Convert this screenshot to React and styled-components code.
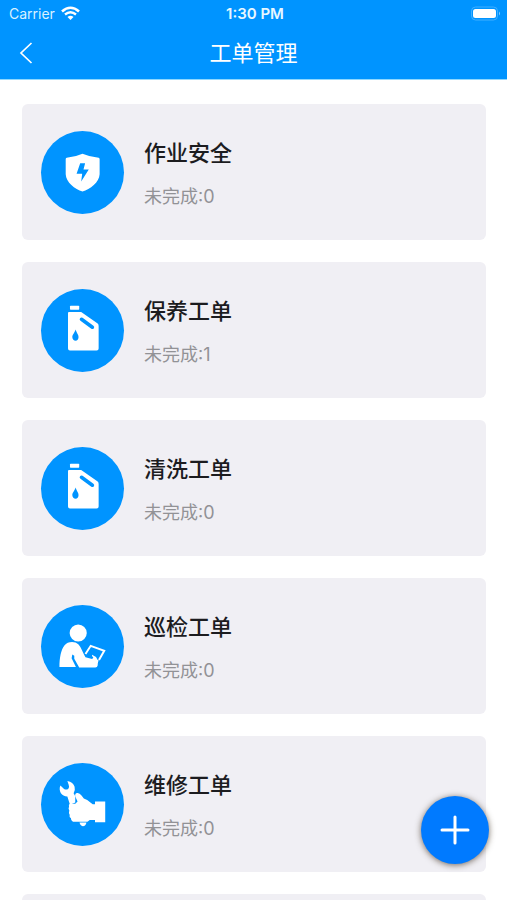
import React from "react";
import styled, { createGlobalStyle } from "styled-components";

const BLUE = "#0094ff";

const GlobalStyle = createGlobalStyle`
  * { box-sizing: border-box; }
  body {
    margin: 0;
    background: #fff;
    font-family: Inter, "Noto Sans CJK SC", sans-serif;
  }
`;

const Screen = styled.div`
  height: 100vh;
  display: flex;
  flex-direction: column;
  overflow: hidden;
`;

const Header = styled.header`
  flex: none;
  color: #fff;
  background: ${BLUE};
  border-bottom: 1px solid #8fd8ff;
`;

const StatusBar = styled.div`
  display: grid;
  grid-template-columns: 1fr auto 1fr;
  align-items: center;
  height: 27px;
  padding: 0 6px 0 9px;
  font-size: 14px;
  line-height: 20px;
`;

const Carrier = styled.div`
  display: flex;
  align-items: center;
  gap: 6px;
  color: #d9f1ff;
`;

const Clock = styled.time`
  font-size: 15px;
  font-weight: 600;
  color: #e8f7ff;
`;

const Battery = styled.svg`
  justify-self: end;
`;

const NavBar = styled.nav`
  display: grid;
  grid-template-columns: 52px 1fr 52px;
  align-items: center;
  height: 52px;
`;

const BackButton = styled.button`
  display: flex;
  align-items: center;
  justify-content: center;
  height: 44px;
  padding: 0;
  border: 0;
  color: inherit;
  background: none;
  cursor: pointer;
`;

const PageTitle = styled.h1`
  margin: 0;
  text-align: center;
  font-size: 22px;
  line-height: 32px;
  font-weight: 400;
`;

const OrderList = styled.main`
  flex: 1;
  min-height: 0;
  display: flex;
  flex-direction: column;
  gap: 22px;
  padding: 24px 21px 24px 22px;
  overflow-y: auto;
  scrollbar-width: none;
`;

const OrderCard = styled.a`
  flex: none;
  display: flex;
  align-items: center;
  gap: 20px;
  height: 136px;
  padding: 0 19px;
  border-radius: 6px;
  background: #f0eff4;
  color: inherit;
  text-decoration: none;
`;

const OrderIcon = styled.svg`
  flex: none;
  width: 83px;
  height: 83px;
  border-radius: 50%;
  background: ${BLUE};
`;

const OrderText = styled.div`
  display: flex;
  flex-direction: column;
  gap: 16px;
  padding-top: 3px;
`;

const OrderName = styled.h2`
  margin: 0;
  font-size: 22px;
  line-height: 30px;
  font-weight: 500;
  color: #1c1c1f;
`;

const OrderCount = styled.p`
  margin: 0;
  font-size: 18px;
  line-height: 26px;
  font-weight: 400;
  color: #929296;
`;

const AddButton = styled.button`
  position: fixed;
  right: 18px;
  bottom: 36px;
  display: flex;
  align-items: center;
  justify-content: center;
  width: 68px;
  height: 68px;
  padding: 0;
  border: 0;
  border-radius: 50%;
  color: #fff;
  background: #007aff;
  box-shadow: 0 1px 6px rgba(60, 45, 30, 0.7);
  cursor: pointer;
`;

const Shield = () => (
  <>
    <path fill="#fff" d="M141 83Q164 93 190 95Q193 96 193 100V145C192 170 164 190 141 198C118 190 91 170 90 145V100Q90 96 93 95Q119 93 141 83Z" />
    <path fill={BLUE} d="M134 112H149L144 131H160L137 167L140 144H123Z" />
  </>
);

const OilCan = () => (
  <>
    <rect x="103" y="65" width="28" height="12" rx="2" fill="#fff" />
    <path fill="#fff" d="M100 84H137L187 119Q190 121 190 126V195Q190 201 184 201H103Q97 201 97 195V87Q97 84 100 84Z" />
    <path d="M138 106L171 130" stroke={BLUE} strokeWidth="11" strokeLinecap="round" />
    <path fill={BLUE} d="M120 137C123 148 129 152 129 160C129 167 125 171 120 171C115 171 110 167 110 160C110 152 117 148 120 137Z" />
  </>
);

const Inspector = () => (
  <>
    <circle cx="128" cy="99" r="26" fill="#fff" />
    <path fill="#fff" d="M71 202C71 174 76 150 86 137C96 124 118 123 129 134C137 143 142 158 150 173L170 178L174 174Q168 168 170 165L182 172L187 181L190 182Q187 190 187 198Q186 204 180 204H131L116 177V168L110 164L108 176L121 202Z" />
    <path fill="none" stroke="#fff" strokeWidth="6" d="M150 163L166 138L207 153L191 181" />
  </>
);

const WrenchHand = () => (
  <>
    <path fill="#fff" d="M74 82L85 93Q92 97 98 92Q102 87 99 80L95 69Q113 73 117 86Q120 97 114 106L119 115V134L103 141L95 116Q82 115 75 105Q69 93 74 82Z" />
    <path fill="#fff" d="M103 138H119L126 131L119 116Q117 106 125 105Q132 104 138 113L145 122Q156 125 164 133L172 139H179V131H210V194H179V187H163L156 192H112Q105 190 106 182Q100 179 102 171Q98 166 101 158Q97 153 100 147Q98 140 103 138Z" />
    <path fill="#fff" d="M132 195H153Q151 206 142 206Q134 205 132 195Z" />
  </>
);

const orders = [
  { name: "作业安全", count: 0, Drawing: Shield },
  { name: "保养工单", count: 1, Drawing: OilCan },
  { name: "清洗工单", count: 0, Drawing: OilCan },
  { name: "巡检工单", count: 0, Drawing: Inspector },
  { name: "维修工单", count: 0, Drawing: WrenchHand },
];

export default function App() {
  return (
    <Screen>
      <GlobalStyle />
      <Header>
        <StatusBar>
          <Carrier>
            Carrier
            <svg width="19" height="15" viewBox="0 0 19 15" fill="none" aria-hidden="true">
              <path d="M1 5.5Q9.5 -2 18 5.5" stroke="#fff" strokeWidth="2.6" />
              <path d="M4 8.5Q9.5 4 15 8.5" stroke="#fff" strokeWidth="2.4" />
              <path d="M6.5 11Q9.5 8.6 12.5 11L9.5 14Z" fill="#fff" />
            </svg>
          </Carrier>
          <Clock>1:30 PM</Clock>
          <Battery width="31" height="15" viewBox="0 0 31 15" aria-hidden="true">
            <rect x="1.5" y="1" width="26" height="13" rx="4" fill="none" stroke="#40afff" />
            <rect x="3" y="3" width="23" height="9" rx="2.5" fill="#fff" />
            <path d="M29 5.5Q31 7.5 29 9.5Z" fill="#8accff" />
          </Battery>
        </StatusBar>
        <NavBar>
          <BackButton aria-label="返回">
            <svg width="14" height="22" viewBox="0 0 14 22" fill="none" aria-hidden="true">
              <path d="M12.5 1L2 11L12.5 21" stroke="currentColor" strokeWidth="1.7" />
            </svg>
          </BackButton>
          <PageTitle>工单管理</PageTitle>
        </NavBar>
      </Header>
      <OrderList>
        {orders.map(({ name, count, Drawing }) => (
          <OrderCard key={name} href="#">
            <OrderIcon viewBox="15 14 252 252" aria-hidden="true">
              <Drawing />
            </OrderIcon>
            <OrderText>
              <OrderName>{name}</OrderName>
              <OrderCount>未完成:{count}</OrderCount>
            </OrderText>
          </OrderCard>
        ))}
        <OrderCard as="div" />
      </OrderList>
      <AddButton aria-label="新增工单">
        <svg width="30" height="30" viewBox="0 0 30 30" aria-hidden="true">
          <path d="M15 2V28M2 15H28" stroke="currentColor" strokeWidth="3" strokeLinecap="round" />
        </svg>
      </AddButton>
    </Screen>
  );
}
